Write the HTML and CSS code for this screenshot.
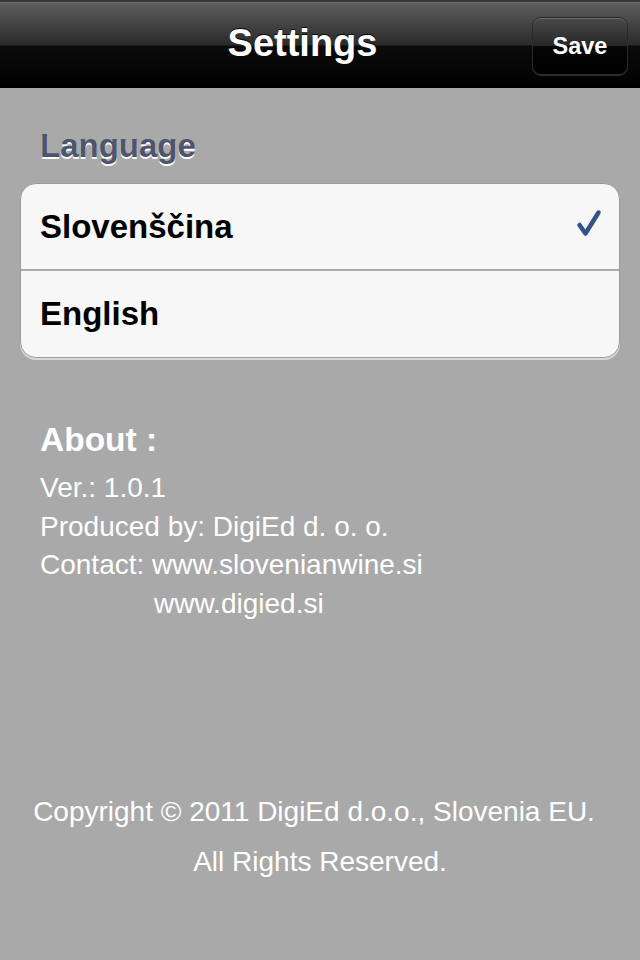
FILE: index.html
```html
<!DOCTYPE html>
<html>
<head>
<meta charset="utf-8">
<link rel="stylesheet" href="styles.css">
</head>
<body>
<header class="navbar">
  <h1 class="nav-title">Settings</h1>
  <button class="save-btn">Save</button>
</header>
<main class="content">
  <h2 class="section-title">Language</h2>
  <ul class="group">
    <li class="row"><span>Slovenščina</span>
      <svg class="check" width="26" height="28" viewBox="0 0 26 28"><path d="M3.5 16 L9.5 24.5 L22.5 3.5" fill="none" stroke="#34538a" stroke-width="4.5" stroke-linecap="round" stroke-linejoin="round"/></svg>
    </li>
    <li class="row row-last"><span>English</span></li>
  </ul>
  <section class="about">
    <h3 class="about-title">About :</h3>
    <p class="line">Ver.: 1.0.1</p>
    <p class="line">Produced by: DigiEd d. o. o.</p>
    <p class="line">Contact: www.slovenianwine.si</p>
    <p class="line indent">www.digied.si</p>
  </section>
  <footer class="copyright">
    <p class="copy-first">Copyright © 2011 DigiEd d.o.o., Slovenia EU.</p>
    <p>All Rights Reserved.</p>
  </footer>
</main>
</body>
</html>
```
FILE: styles.css
```css
* { box-sizing: border-box; }
html, body { margin: 0; padding: 0; }
body {
  width: 640px;
  height: 960px;
  background: #a9a9a9;
  font-family: "Liberation Sans", Arial, sans-serif;
  overflow: hidden;
}
.navbar {
  height: 88px;
  display: flex;
  align-items: center;
  justify-content: center;
  position: relative;
  border-top: 2px solid #383838;
  background: linear-gradient(to bottom, #707070 0px, #5c5c5c 2px, #2a2a2a 43px, #0b0b0b 44px, #000 86px);
}
.nav-title {
  margin: -4px 35px 0 0;
  color: #fff;
  font-size: 38px;
  line-height: 44px;
  font-weight: bold;
  text-shadow: 0 -1px 0 #000;
}
.save-btn {
  position: absolute;
  right: 12px;
  top: 15px;
  width: 96px;
  height: 58px;
  border-radius: 9px;
  border: 1px solid #2a2a2a;
  background: linear-gradient(to bottom, #4a4a4a 0%, #262626 50%, #050505 51%, #000 100%);
  box-shadow: 0 1px 0 rgba(255,255,255,0.18), inset 0 1px 0 rgba(255,255,255,0.2);
  color: #fff;
  font-family: "Liberation Sans", Arial, sans-serif;
  font-weight: bold;
  font-size: 23.5px;
  padding: 0;
}
.content {
  padding: 0 20px;
}
.section-title {
  margin: 40px 0 0 20px;
  height: 55px;
  font-size: 33px;
  line-height: 36px;
  font-weight: bold;
  color: #4d566c;
  text-shadow: 0 2px 0 #fff;
}
.group {
  list-style: none;
  margin: 0;
  padding: 0;
  background: #f7f7f7;
  border-radius: 16px;
  border: 1px solid #9a9a9a;
  box-shadow: 0 2px 0 #d8d8d8;
  overflow: hidden;
}
.row {
  display: flex;
  align-items: center;
  justify-content: space-between;
  height: 85px;
  padding: 0 17px 0 19px;
  font-size: 33px;
  font-weight: bold;
  color: #000;
}
.row + .row {
  border-top: 2px solid #acacac;
}
.row-last { height: 88px; }
.check { display: block; margin-top: -8px; }
.about {
  margin: 62px 0 0 20px;
  color: #fff;
}
.about-title {
  margin: 0 0 9px;
  font-size: 33.5px;
  line-height: 40px;
  font-weight: bold;
}
.line {
  margin: 0;
  font-size: 28px;
  line-height: 38.5px;
}
.indent { padding-left: 114px; }
.copyright {
  margin-top: 164px;
  text-align: center;
  color: #fff;
  font-size: 28px;
}
.copyright p {
  margin: 0;
  line-height: 50px;
}
.copyright .copy-first { padding-right: 12px; }
```
